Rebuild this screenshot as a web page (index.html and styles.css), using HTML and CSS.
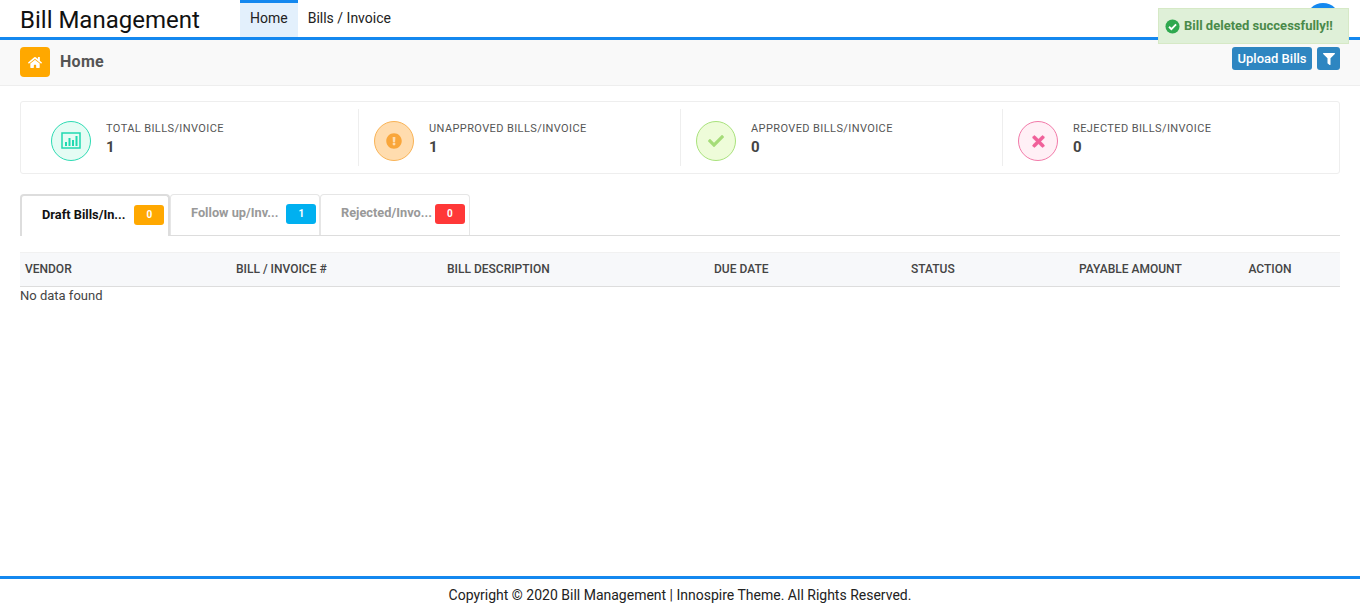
FILE: index.html
```html
<!DOCTYPE html>
<html lang="en">
<head>
<meta charset="utf-8">
<title>Bill Management</title>
<link rel="stylesheet" href="styles.css">
</head>
<body>
<div class="page">
  <header class="topbar">
    <div class="brand">Bill Management</div>
    <nav class="nav">
      <a class="nav-item active">Home</a>
      <a class="nav-item">Bills / Invoice</a>
    </nav>
    <div class="avatar"></div>
  </header>
  <div class="subbar">
    <div class="crumb">
      <span class="home-tile">
        <svg viewBox="0 0 576 512" width="14" height="13"><path fill="#fff" d="M280.4 148.3L96 300.1V464a16 16 0 0 0 16 16l112-.3a16 16 0 0 0 16-16V368a16 16 0 0 1 16-16h64a16 16 0 0 1 16 16v95.6a16 16 0 0 0 16 16l112 .4a16 16 0 0 0 16-16V300L295.700 148.300a12.200 12.200 0 0 0-15.300 0zM571.600 251.500L488 182.600V44a12 12 0 0 0-12-12h-56a12 12 0 0 0-12 12v72.600L318.500 43a48 48 0 0 0-61 0L4.300 251.500a12 12 0 0 0-1.600 16.900l25.500 31A12 12 0 0 0 45.200 301l235.200-193.700a12.200 12.200 0 0 1 15.300 0L530.900 301a12 12 0 0 0 16.900-1.600l25.500-31a12 12 0 0 0-1.700-16.900z"/></svg>
      </span>
      <span class="crumb-title">Home</span>
    </div>
    <div class="actions">
      <button class="btn">Upload Bills</button>
      <button class="btn btn-icon">
        <svg viewBox="0 0 512 512" width="12" height="12"><path fill="#fff" d="M487.976 0H24.028C2.710 0-8.047 25.866 7.058 40.971L192 225.941V432c0 7.831 3.821 15.170 10.237 19.662l80 55.980C298.020 518.690 320 507.493 320 487.980V225.941l184.947-184.970C520.021 25.896 509.338 0 487.976 0z"/></svg>
      </button>
    </div>
  </div>
  <main class="content">
    <section class="stats">
      <div class="stat first">
        <span class="ring ring-teal">
          <svg viewBox="0 0 20 18" width="20" height="18"><rect x="1" y="1" width="18" height="15" fill="none" stroke="#1fd9b0" stroke-width="1.500"/><rect x="4" y="10" width="2" height="4" fill="#1fd9b0"/><rect x="7.500" y="6" width="2" height="8" fill="#1fd9b0"/><rect x="11" y="8" width="2" height="6" fill="#1fd9b0"/><rect x="14.500" y="4" width="2" height="10" fill="#1fd9b0"/></svg>
        </span>
        <div class="stat-text"><div class="stat-label">TOTAL BILLS/INVOICE</div><div class="stat-value">1</div></div>
      </div>
      <div class="stat">
        <span class="ring ring-orange">
          <svg viewBox="0 0 512 512" width="16" height="16"><path fill="#f9a63a" d="M504 256c0 137-111 248-248 248S8 393 8 256 119 8 256 8s248 111 248 248zm-248 50a46 46 0 1 0 0 92 46 46 0 0 0 0-92zm-43.700-165.400l7.400 136c.3 6.400 5.600 11.400 12 11.400h48.500c6.400 0 11.700-5 12-11.400l7.400-136c.4-6.900-5.100-12.600-12-12.600h-63.800c-6.900 0-12.400 5.700-12 12.600z"/></svg>
        </span>
        <div class="stat-text"><div class="stat-label">UNAPPROVED BILLS/INVOICE</div><div class="stat-value">1</div></div>
      </div>
      <div class="stat">
        <span class="ring ring-green">
          <svg viewBox="0 0 512 512" width="16" height="16"><path fill="#a5dc78" d="M173.900 439.400l-166.400-166.400c-10-10-10-26.200 0-36.200l36.200-36.200c10-10 26.200-10 36.200 0L192 312.700 432.100 72.600c10-10 26.200-10 36.200 0l36.200 36.200c10 10 10 26.200 0 36.200l-294.400 294.400c-10 10-26.200 10-36.200 0z"/></svg>
        </span>
        <div class="stat-text"><div class="stat-label">APPROVED BILLS/INVOICE</div><div class="stat-value">0</div></div>
      </div>
      <div class="stat">
        <span class="ring ring-pink">
          <svg viewBox="0 0 352 512" width="13" height="17"><path fill="#f0609a" stroke="#f0609a" stroke-width="20" d="M242.700 256l100-100c12.300-12.300 12.300-32.200 0-44.500l-22.200-22.200c-12.300-12.300-32.200-12.300-44.500 0L176 189.300 76 89.300c-12.300-12.300-32.200-12.300-44.500 0L9.300 111.500c-12.300 12.300-12.300 32.200 0 44.500l100 100-100 100c-12.300 12.300-12.300 32.200 0 44.500l22.200 22.200c12.300 12.300 32.200 12.300 44.500 0l100-100 100 100c12.300 12.300 32.200 12.300 44.500 0l22.200-22.200c12.300-12.300 12.300-32.200 0-44.500L242.700 256z"/></svg>
        </span>
        <div class="stat-text"><div class="stat-label">REJECTED BILLS/INVOICE</div><div class="stat-value">0</div></div>
      </div>
    </section>

    <div class="tabs">
      <div class="tab tab-active"><span class="tab-name">Draft Bills/In...</span><span class="pill pill-orange">0</span></div>
      <div class="tab tab-second"><span class="tab-name">Follow up/Inv...</span><span class="pill pill-blue">1</span></div>
      <div class="tab tab-third"><span class="tab-name">Rejected/Invo...</span><span class="pill pill-red">0</span></div>
    </div>

    <div class="thead">
      <div class="th col-vendor">VENDOR</div>
      <div class="th col-bill">BILL / INVOICE #</div>
      <div class="th col-desc">BILL DESCRIPTION</div>
      <div class="th col-due">DUE DATE</div>
      <div class="th col-status">STATUS</div>
      <div class="th col-amount">PAYABLE AMOUNT</div>
      <div class="th col-action">ACTION</div>
    </div>
    <div class="empty">No data found</div>
  </main>
  <footer class="footer">Copyright © 2020 Bill Management | Innospire Theme. All Rights Reserved.</footer>
</div>
<div class="toast">
  <svg viewBox="0 0 16 16" width="15" height="15"><circle cx="8" cy="8" r="7.500" fill="#2fa84f"/><path d="M4.300 8.300l2.500 2.500 5-5" fill="none" stroke="#fff" stroke-width="2"/></svg>
  <span class="toast-text">Bill deleted successfully!!</span>
</div>
</body>
</html>
```
FILE: styles.css
```css
* { box-sizing: border-box; }
html, body { margin: 0; padding: 0; height: 100%; }
body { font-family: Roboto, "Liberation Sans", sans-serif; color: #333; background: #fff; overflow: hidden; }
.page { height: 613px; display: flex; flex-direction: column; }

.topbar { height: 40px; flex: none; display: flex; align-items: flex-start; border-bottom: 3px solid #1488ef; padding-left: 20px; position: relative; overflow: hidden; }
.brand { width: 220px; font-size: 24px; line-height: 40px; color: #111; }
.nav { display: flex; height: 37px; }
.nav-item { font-size: 14px; line-height: 31px; padding: 0 10px; color: #222; border-top: 3px solid transparent; height: 37px; }
.nav-item.active { background: #e3f0fc; border-top-color: #1488ef; }
.avatar { position: absolute; right: 20px; top: 3px; width: 34px; height: 34px; border-radius: 50%; background: #1488ef; }

.subbar { height: 46px; flex: none; background: #f9f9f9; border-bottom: 1px solid #eee; display: flex; justify-content: space-between; padding: 7px 20px 0; }
.crumb { display: flex; align-items: flex-start; gap: 10px; }
.home-tile { width: 30px; height: 30px; border-radius: 4px; background: #ffa800; display: flex; align-items: center; justify-content: center; }
.crumb-title { font-size: 16px; font-weight: 700; line-height: 29px; color: #555; letter-spacing: .3px; }
.actions { display: flex; gap: 5px; }
.btn { width: 80px; height: 23px; border: 0; border-radius: 3px; background: #2e86c1; color: #fff; font: 500 13px/23px Roboto, sans-serif; padding: 0; }
.btn-icon { width: 23px; padding: 0; display: flex; align-items: center; justify-content: center; }

.content { flex: 1; padding: 15px 20px 0; }
.stats { height: 73px; border: 1px solid #eee; border-radius: 3px; display: flex; padding: 7px 0; }
.stat { display: flex; align-items: flex-start; padding-left: 15px; padding-top: 12px; border-left: 1px solid #eee; width: 322px; }
.stat.first { border-left: 0; width: 337px; padding-left: 30px; }
.ring { width: 40px; height: 40px; flex: none; border-radius: 50%; border: 1px solid; display: flex; align-items: center; justify-content: center; }
.ring-teal { background: #e5fcf4; border-color: #2ddbb3; }
.ring-orange { background: #ffdcae; border-color: #f9b356; }
.ring-green { background: #eefcd9; border-color: #a9e27c; }
.ring-pink { background: #fff0f6; border-color: #f27aa9; }
.stat-text { margin-left: 15px; margin-top: -3px; }
.stat-label { font-size: 11px; line-height: 16px; letter-spacing: .4px; color: #555; margin-top: 3px; }
.stat-value { font-size: 15px; font-weight: 700; line-height: 20px; color: #444; }

.tabs { display: flex; height: 42px; margin-top: 20px; border-bottom: 1px solid #ddd; align-items: flex-start; }
.tab { height: 41px; display: flex; border: 1px solid #e6e6e6; border-bottom: 0; border-radius: 4px 4px 0 0; color: #999; font-size: 12.800px; font-weight: 700; }
.tab-name { white-space: nowrap; line-height: 18px; }
.tab-active { width: 150px; height: 42px; border: 2px solid #ddd; border-bottom: 0; color: #111; padding: 9px 0 0 20px; gap: 9px; background: #fff; }
.tab-active .tab-name { padding-top: 1px; }
.tab-second { width: 150px; padding: 9px 0 0 20px; gap: 8px; }
.tab-third { width: 150px; padding: 9px 0 0 20px; gap: 3px; }
.pill { width: 30px; height: 20px; border-radius: 3px; color: #fff; font-size: 10px; line-height: 20px; text-align: center; }
.pill-orange { background: #ffa800; }
.pill-blue { background: #00b0f0; }
.pill-red { background: #ff3838; }

.thead { display: flex; height: 35px; margin-top: 16px; padding-bottom: 2px; background: #f7f8fa; border-top: 1px solid #f1f1f1; border-bottom: 1px solid #ddd; align-items: center; font-size: 12px; font-weight: 500; color: #444; }
.th { padding-left: 5px; white-space: nowrap; }
.col-vendor { width: 211px; }
.col-bill { width: 211px; }
.col-desc { width: 267px; }
.col-due { width: 197px; }
.col-status { width: 168px; }
.col-amount { width: 169.500px; }
.col-action { width: 80px; }
.empty { font-size: 13px; line-height: 18px; color: #444; }

.footer { height: 37px; flex: none; border-top: 3px solid #1488ef; text-align: center; font-size: 14px; line-height: 32px; color: #222; }

.toast { position: absolute; left: 1158px; top: 8px; width: 191px; height: 36px; background: #dff0d8; border: 1px solid #d6e9c6; display: flex; align-items: center; gap: 4px; padding-left: 6px; color: #4a8a4a; font-size: 13px; font-weight: 700; }
.toast-text { margin-top: -2px; }
```
